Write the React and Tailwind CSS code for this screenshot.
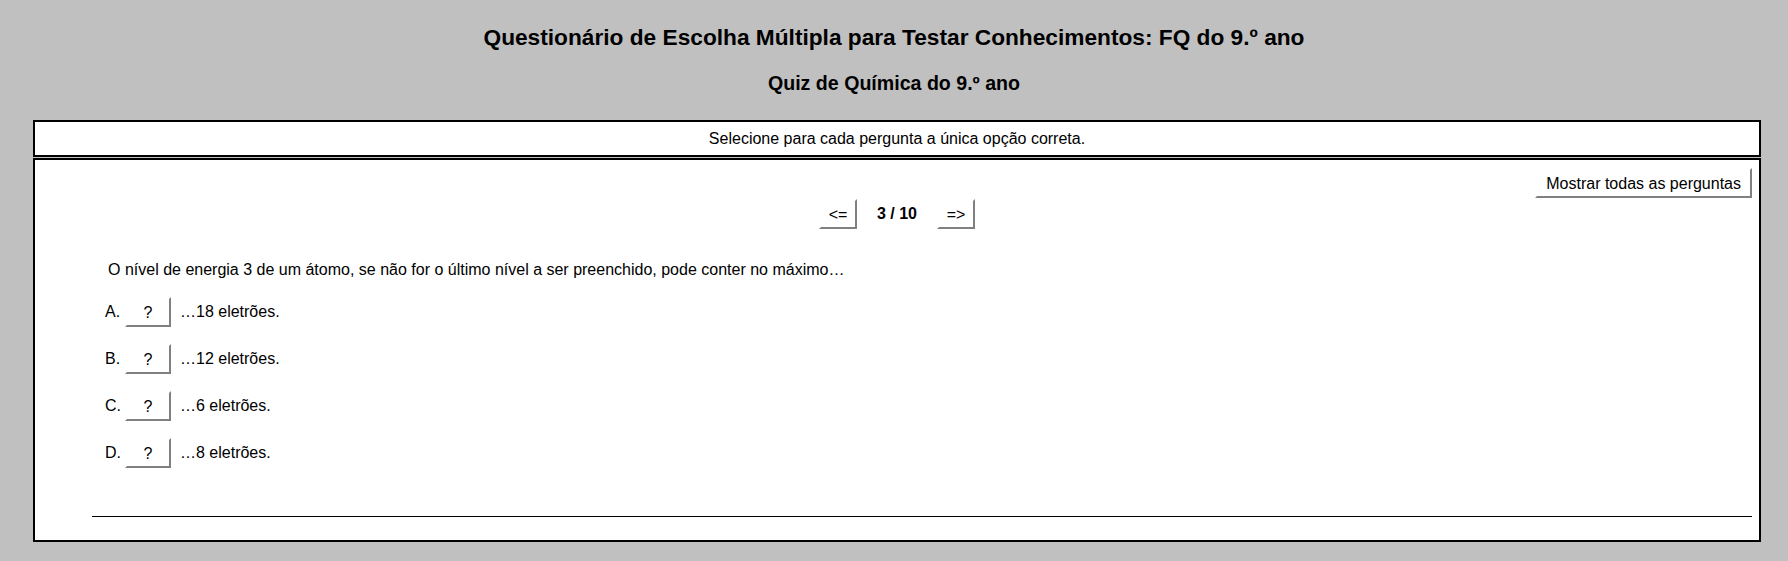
import { useState } from 'react';

const options = [
  { letter: 'A.', text: '…18 eletrões.' },
  { letter: 'B.', text: '…12 eletrões.' },
  { letter: 'C.', text: '…6 eletrões.' },
  { letter: 'D.', text: '…8 eletrões.' },
];

// raised grey button used across the quiz
function QuizButton({ children, className = '', onClick }) {
  return (
    <button
      type="button"
      onClick={onClick}
      className={`h-[30px] pt-[2px] bg-white border-2 border-t-white border-l-white border-r-[#808080] border-b-[#808080] text-[16px] text-black leading-none ${className}`}
    >
      {children}
    </button>
  );
}

export default function App() {
  const [current, setCurrent] = useState(3);

  return (
    <div
      className="min-h-[561px] bg-[#c0c0c0] text-black pt-[25px]"
      style={{ fontFamily: '"Liberation Sans", Arial, sans-serif' }}
    >
      <h1 className="text-center text-[22.7px] font-bold leading-[24px]">
        Questionário de Escolha Múltipla para Testar Conhecimentos: FQ do 9.º ano
      </h1>
      <h2 className="mt-[23px] text-center text-[19.6px] font-bold leading-[22px]">
        Quiz de Química do 9.º ano
      </h2>

      <div className="ml-[33px] mt-[26px] w-[1728px]">
        <div className="h-[37px] border-2 border-black bg-white flex items-center justify-center text-[16px]">
          Selecione para cada pergunta a única opção correta.
        </div>

        <div className="mt-[1px] h-[384px] border-2 border-black bg-white flex flex-col">
          <div className="flex justify-end pt-[8px] pr-[7px]">
            <QuizButton className="px-[9px]">Mostrar todas as perguntas</QuizButton>
          </div>

          <div className="mt-[1px] flex items-center justify-center">
            <QuizButton className="w-[38px]" onClick={() => setCurrent(Math.max(1, current - 1))}>
              &lt;=
            </QuizButton>
            <span className="mx-[20px] text-[16px] font-bold">{current} / 10</span>
            <QuizButton className="w-[38px]" onClick={() => setCurrent(Math.min(10, current + 1))}>
              =&gt;
            </QuizButton>
          </div>

          <p className="mt-[32px] pl-[73px] text-[16px] leading-[18px]">
            O nível de energia 3 de um átomo, se não for o último nível a ser preenchido, pode conter no máximo…
          </p>

          <div className="mt-[18px] pl-[70px] flex flex-col gap-[17px]">
            {options.map((o) => (
              <div key={o.letter} className="flex items-center h-[30px] text-[16px]">
                <span className="w-[20px]">{o.letter}</span>
                <QuizButton className="w-[46px]">?</QuizButton>
                <span className="ml-[9px]">{o.text}</span>
              </div>
            ))}
          </div>

          <hr className="mt-[48px] ml-[57px] mr-[7px] border-0 border-t border-black" />
        </div>
      </div>
    </div>
  );
}
